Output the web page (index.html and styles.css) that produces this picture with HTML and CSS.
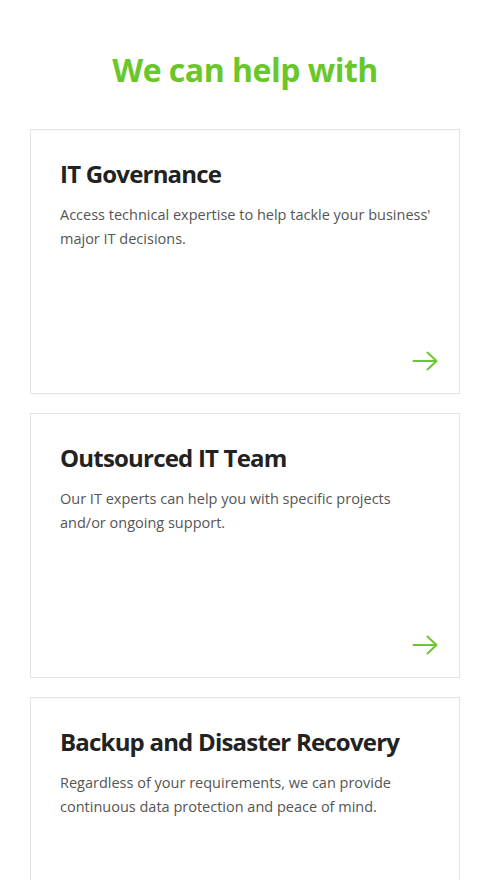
FILE: index.html
```html
<!DOCTYPE html>
<html lang="en">
<head>
<meta charset="utf-8">
<title>We can help with</title>
<link rel="stylesheet" href="styles.css">
</head>
<body>
<section class="services">
  <h1 class="services-title">We can help with</h1>
  <div class="card-list">
    <a class="card" href="#">
      <h2 class="card-title">IT Governance</h2>
      <p class="card-text">Access technical expertise to help tackle your business' major IT decisions.</p>
      <svg class="card-arrow" width="26" height="20" viewBox="0 0 26 20" fill="none" stroke="#6cc62e" stroke-width="2" stroke-linecap="round" stroke-linejoin="round"><path d="M1.5 10H24.5M15.5 1.5L24.5 10L15.5 18.5"/></svg>
    </a>
    <a class="card" href="#">
      <h2 class="card-title">Outsourced IT Team</h2>
      <p class="card-text">Our IT experts can help you with specific projects and/or ongoing support.</p>
      <svg class="card-arrow" width="26" height="20" viewBox="0 0 26 20" fill="none" stroke="#6cc62e" stroke-width="2" stroke-linecap="round" stroke-linejoin="round"><path d="M1.5 10H24.5M15.5 1.5L24.5 10L15.5 18.5"/></svg>
    </a>
    <a class="card" href="#">
      <h2 class="card-title">Backup and Disaster Recovery</h2>
      <p class="card-text">Regardless of your requirements, we can provide continuous data protection and peace of mind.</p>
      <svg class="card-arrow" width="26" height="20" viewBox="0 0 26 20" fill="none" stroke="#6cc62e" stroke-width="2" stroke-linecap="round" stroke-linejoin="round"><path d="M1.5 10H24.5M15.5 1.5L24.5 10L15.5 18.5"/></svg>
    </a>
  </div>
</section>
</body>
</html>
```
FILE: styles.css
```css
html, body {
  margin: 0;
  padding: 0;
  background: #ffffff;
}
body {
  font-family: "Open Sans", "Noto Sans", sans-serif;
  color: #222;
}
.services {
  padding: 48px 30px 40px;
}
.services-title {
  margin: 0 0 37px;
  text-align: center;
  font-size: 32px;
  line-height: 44px;
  font-weight: 700;
  color: #6ac72a;
  letter-spacing: -0.5px;
}
.card-list {
  display: flex;
  flex-direction: column;
  gap: 19px;
}
.card {
  display: flex;
  flex-direction: column;
  height: 265px;
  box-sizing: border-box;
  border: 1px solid #e3e3e3;
  padding: 27px 21px 22px 29px;
  text-decoration: none;
  color: inherit;
}
.card-title {
  margin: 0 0 12px;
  font-size: 24px;
  line-height: 34px;
  font-weight: 700;
  color: #222;
  letter-spacing: -0.8px;
}
.card-text {
  margin: 0;
  font-size: 14.5px;
  line-height: 24px;
  color: #555;
}
.card-arrow {
  margin-top: auto;
  align-self: flex-end;
}
```
